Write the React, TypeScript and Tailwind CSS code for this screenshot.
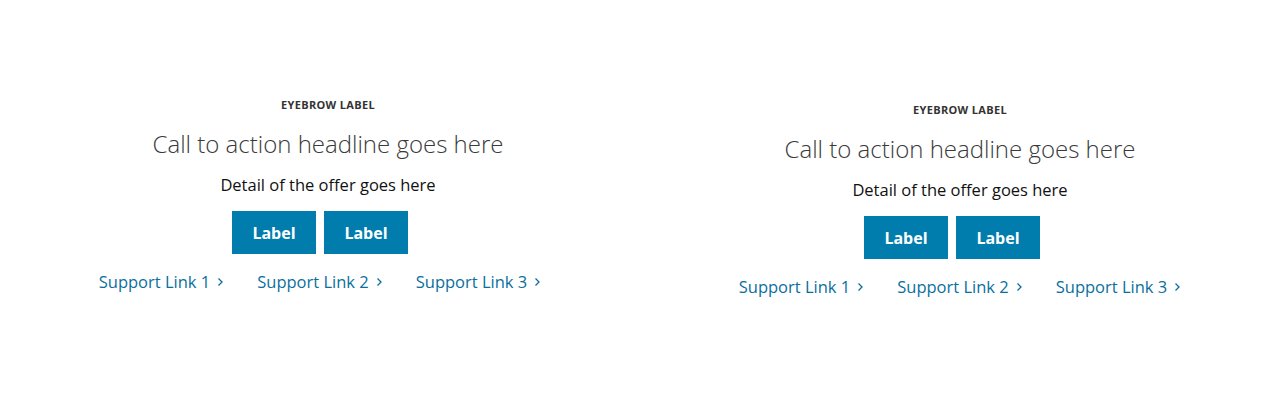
import React from "react";

function Chevron() {
  return (
    <svg width="7" height="10" viewBox="0 0 7 10" className="ml-[7px] inline-block" fill="none">
      <path d="M1.5 1.5 L5 5 L1.5 8.5" stroke="currentColor" strokeWidth="1.3" />
    </svg>
  );
}

function Block({ top, textPad, btnPad }: { top: string; textPad: string; btnPad: string }) {
  return (
    <div className={`flex w-1/2 flex-col items-center ${top}`}>
      <div className={`flex flex-col items-center ${textPad}`}>
        <div className="text-[11px] font-bold leading-[14px] tracking-[0.03em] text-[#333333]">EYEBROW LABEL</div>
        <div className="mt-[17px] text-[24px] font-light leading-[30px] text-[#3a3a3a]">Call to action headline goes here</div>
        <div className="mt-[15px] text-[16.5px] leading-[22px] text-[#111111]">Detail of the offer goes here</div>
      </div>
      <div className={`mt-[15px] flex gap-2 ${btnPad}`}>
        <button className="flex h-[43px] w-[84px] items-center justify-center bg-[#007dad] text-[16px] font-bold text-white">Label</button>
        <button className="flex h-[43px] w-[84px] items-center justify-center bg-[#007dad] text-[16px] font-bold text-white">Label</button>
      </div>
      <div className="mt-[17px] flex gap-[33px] text-[16.5px] leading-[22px] text-[#0a6f9e]">
        <a className="flex items-center">Support Link 1<Chevron /></a>
        <a className="flex items-center">Support Link 2<Chevron /></a>
        <a className="flex items-center">Support Link 3<Chevron /></a>
      </div>
    </div>
  );
}

export default function App() {
  return (
    <div className="flex h-[400px] w-[1280px] bg-white font-['Open_Sans',sans-serif]">
      <Block top="pt-[98px]" textPad="pl-4" btnPad="" />
      <Block top="pt-[103px]" textPad="" btnPad="pr-4" />
    </div>
  );
}
